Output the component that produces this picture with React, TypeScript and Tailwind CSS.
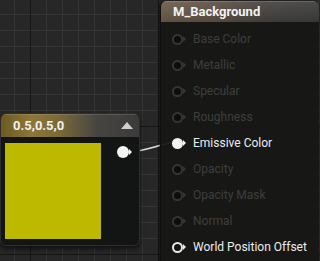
import React from "react";

type Pin = { label: string; state: "off" | "filled" | "hollow" };

const pins: Pin[] = [
  { label: "Base Color", state: "off" },
  { label: "Metallic", state: "off" },
  { label: "Specular", state: "off" },
  { label: "Roughness", state: "off" },
  { label: "Emissive Color", state: "filled" },
  { label: "Opacity", state: "off" },
  { label: "Opacity Mask", state: "off" },
  { label: "Normal", state: "off" },
  { label: "World Position Offset", state: "hollow" },
];

function PinIcon({ state }: { state: Pin["state"] }) {
  if (state === "filled") {
    return (
      <div className="flex items-center">
        <div className="w-[11px] h-[11px] rounded-full bg-[#f2f2f2]" />
        <div className="w-0 h-0 border-y-[3px] border-y-transparent border-l-[3px] border-l-[#f2f2f2]" />
      </div>
    );
  }
  if (state === "hollow") {
    return (
      <div className="flex items-center">
        <div className="w-[11px] h-[11px] rounded-full border-2 border-[#e8e8e8] bg-[#151614]" />
        <div className="w-0 h-0 border-y-[3px] border-y-transparent border-l-[3px] border-l-[#e8e8e8]" />
      </div>
    );
  }
  return (
    <div className="flex items-center">
      <div className="w-[11px] h-[11px] rounded-full border-2 border-[#353634] bg-[#0c0d0c]" />
      <div className="w-0 h-0 border-y-[3px] border-y-transparent border-l-[3px] border-l-[#353634]" />
    </div>
  );
}

export default function App() {
  return (
    <div
      className="relative w-[320px] h-[261px] overflow-hidden bg-[#272727] [background-image:linear-gradient(to_right,#161616_1px,transparent_1px),linear-gradient(to_bottom,#161616_1px,transparent_1px),linear-gradient(to_right,#353535_1px,transparent_1px),linear-gradient(to_bottom,#353535_1px,transparent_1px)] [background-size:128px_128px,128px_128px,16px_16px,16px_16px] [background-position:30px_0,0_126px,14px_14px,14px_14px]"
      style={{ fontFamily: "Roboto, 'Noto Sans', sans-serif" }}
    >
      {/* wire */}
      <svg className="absolute left-0 top-0" width="320" height="261">
        <path d="M130 152 C 150 150, 156 145, 176 142" stroke="#e0e0e0" strokeWidth="1.6" fill="none" />
      </svg>

      {/* Constant node */}
      <div className="absolute left-0 top-[113px] w-[140px] h-[133px] rounded-[6px] bg-[#131514] border border-[#2c2d2c] shadow-[0_3px_5px_rgba(0,0,0,0.6)] flex flex-col overflow-hidden">
        <div className="h-[23px] shrink-0 flex items-center justify-between pl-[12px] pr-[6px] bg-[linear-gradient(to_right,#6c5a22,#8e7736_22%,#7a6a3a_42%,#454441_70%,#3b3b3a)] shadow-[inset_0_1px_0_rgba(255,255,255,0.12)]">
          <span className="text-[13px] font-bold text-[#f0f0f0] leading-none">0.5,0.5,0</span>
          <div className="w-0 h-0 border-x-[6px] border-x-transparent border-b-[7px] border-b-[#cfcfcf]" />
        </div>
        <div className="flex-1 flex items-start pt-[6px] pl-[4px]">
          <div className="w-[96px] h-[96px] bg-[#bdb900]" />
          <div className="ml-[16px] mt-[3px] flex items-center">
            <div className="w-[12px] h-[12px] rounded-full bg-[#f4f4f4]" />
            <div className="w-0 h-0 border-y-[3px] border-y-transparent border-l-[3px] border-l-[#f4f4f4]" />
          </div>
        </div>
      </div>

      {/* Material result node */}
      <div className="absolute left-[160px] top-[1px] w-[159px] h-[280px] rounded-t-[6px] bg-[rgba(22,23,21,0.94)] border-l border-[#0e0e0e] flex flex-col overflow-hidden shadow-[-1px_0_2px_rgba(0,0,0,0.5)]">
        <div className="h-[21px] shrink-0 flex items-center pl-[12px] bg-[linear-gradient(to_bottom,rgba(255,255,255,0.07),rgba(0,0,0,0.12)),linear-gradient(to_right,#6e5d4b,#5e5246_35%,#474441_65%,#3e3e3d)] shadow-[inset_0_1px_0_rgba(255,255,255,0.15)]">
          <span className="text-[13px] font-bold text-[#f2f2f2] leading-none">M_Background</span>
        </div>
        <div className="flex flex-col pt-[4px]">
          {pins.map((p) => (
            <div key={p.label} className="h-[26px] flex items-center pl-[11px]">
              <PinIcon state={p.state} />
              <span
                className={
                  "ml-[7px] text-[12px] leading-none whitespace-nowrap " +
                  (p.state === "off" ? "text-[#3d3e3c]" : "text-[#ececec]")
                }
              >
                {p.label}
              </span>
            </div>
          ))}
        </div>
      </div>
    </div>
  );
}
